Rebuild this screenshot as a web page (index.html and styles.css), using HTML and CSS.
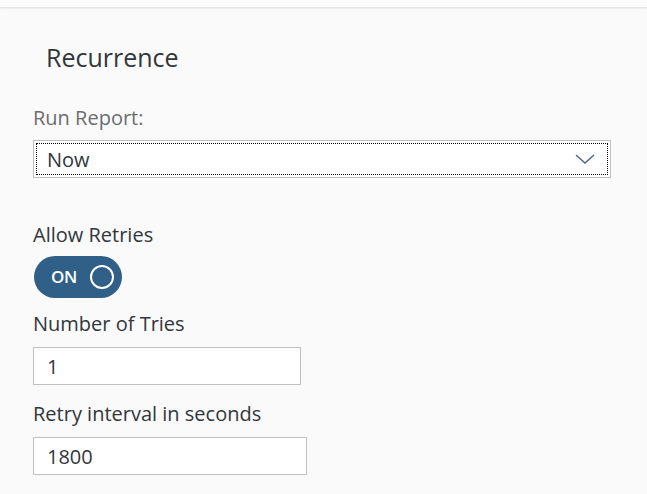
FILE: index.html
```html
<!DOCTYPE html>
<html>
<head>
<meta charset="utf-8">
<link rel="stylesheet" href="styles.css">
</head>
<body>
<div class="topbar"></div>
<main class="panel">
  <h2 class="title">Recurrence</h2>
  <div class="field run">
    <label class="lbl muted">Run Report:</label>
    <div class="select">
      <div class="select-inner">
        <span class="val">Now</span>
        <svg class="chev" width="20" height="10" viewBox="0 0 20 10"><path d="M1 1 L10 9 L19 1" fill="none" stroke="#556b82" stroke-width="1.6"/></svg>
      </div>
    </div>
  </div>
  <div class="field retries">
    <label class="lbl">Allow Retries</label>
    <div class="toggle">
      <span class="on">ON</span>
      <span class="knob"></span>
    </div>
  </div>
  <div class="field tries">
    <label class="lbl">Number of Tries</label>
    <div class="input w1"><span class="val">1</span></div>
  </div>
  <div class="field interval">
    <label class="lbl">Retry interval in seconds</label>
    <div class="input w2"><span class="val">1800</span></div>
  </div>
</main>
</body>
</html>
```
FILE: styles.css
```css
html, body {
  margin: 0;
  padding: 0;
  background: #fafafa;
  font-family: "Open Sans", "Liberation Sans", sans-serif;
  color: #32363a;
}
.topbar {
  height: 7px;
  background: #fbfbfb;
  border-bottom: 1px solid #e6e6e6;
  box-shadow: 0 1px 2px rgba(0,0,0,0.06);
}
.panel {
  padding: 0 36px 0 33px;
  display: flex;
  flex-direction: column;
}
.title {
  margin: 34px 0 0 13px;
  font-size: 25px;
  font-weight: 400;
  line-height: 30px;
  color: #32363a;
}
.field {
  display: flex;
  flex-direction: column;
  align-items: flex-start;
}
.lbl {
  font-size: 20px;
  line-height: 24px;
  color: #32363a;
}
.muted { color: #6a6d70; }
.run { margin-top: 34px; }
.run .lbl { margin-bottom: 10px; }
.select {
  width: 578px;
  height: 38px;
  box-sizing: border-box;
  border: 1px solid #bfbfbf;
  background: #fff;
  padding: 2px;
}
.select-inner {
  height: 100%;
  box-sizing: border-box;
  border: 1px dotted #000;
  display: flex;
  align-items: center;
  justify-content: space-between;
  padding: 0 12px 0 10px;
}
.val {
  font-size: 20px;
  color: #32363a;
}
.chev { display: block; }
.retries { margin-top: 45px; }
.retries .lbl { margin-bottom: 9px; }
.toggle {
  width: 88px;
  height: 42px;
  margin-left: 1px;
  border-radius: 21px;
  background: #305f88;
  display: flex;
  align-items: center;
  box-sizing: border-box;
  padding-left: 17px;
}
.on {
  color: #fff;
  font-size: 17px;
  font-weight: 600;
  width: 39px;
  letter-spacing: -0.3px;
  margin-top: -2px;
}
.knob {
  width: 24px;
  height: 24px;
  box-sizing: border-box;
  border: 2.6px solid #fff;
  border-radius: 50%;
}
.tries { margin-top: 14px; }
.tries .lbl { margin-bottom: 11px; }
.interval { margin-top: 17px; }
.interval .lbl { margin-bottom: 11px; }
.input {
  height: 38px;
  box-sizing: border-box;
  border: 1px solid #bfbfbf;
  background: #fff;
  display: flex;
  align-items: center;
  padding-left: 13px;
}
.w1 { width: 268px; }
.w2 { width: 274px; }
```
